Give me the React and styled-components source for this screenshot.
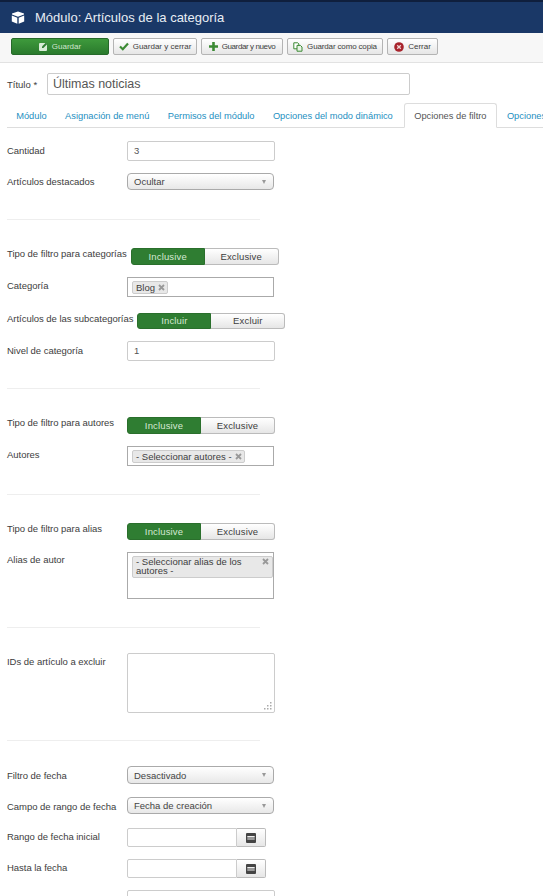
import React from 'react';
import styled, { createGlobalStyle } from 'styled-components';

const Global = createGlobalStyle`
  html, body { margin: 0; padding: 0; background: #fff; }
  body { width: 543px; height: 896px; overflow: hidden; font-family: "Liberation Sans", Arial, sans-serif; font-size: 9.5px; color: #3d3d3d; }
  * { box-sizing: border-box; }
`;
const Page = styled.div`width: 543px; height: 896px; overflow: hidden;`;
const Header = styled.header`
  height: 33px; background: #1a3867; border-top: 2px solid #0f1f3d;
  display: flex; align-items: center; padding-left: 11px; gap: 10px; color: #fff;
`;
const HeaderTitle = styled.h1`margin: 0; font-size: 13px; font-weight: 400; color: #e8edf4;`;
const Toolbar = styled.div`
  height: 30px; background: #f7f7f7; border-bottom: 1px solid #e2e2e2;
  display: flex; align-items: center; gap: 4px; padding: 0 0 2px 11px;
`;
const Btn = styled.button`
  height: 17px; width: ${p => p.$w}px; padding: 0; border: 1px solid #b4b4b4; border-radius: 2px;
  background: linear-gradient(#fff, #e6e6e6); font: 8px "Liberation Sans", sans-serif; color: #3d3d3d;
  letter-spacing: ${p => p.$ls ?? 0}px;
  display: flex; align-items: center; justify-content: center; gap: 4px;
`;
const SaveBtn = styled(Btn)`
  background: linear-gradient(#3e9a3c, #2a7a2d); border-color: #26692a; color: #cfe6cd;
`;
const TitleRow = styled.div`display: flex; align-items: center; margin: 10px 0 0 7px;`;
const TitleLabel = styled.label`width: 40px; font-size: 9.5px;`;
const TitleInput = styled.div`
  width: 363px; height: 22px; border: 1px solid #ccc; border-radius: 2px; font-size: 12.5px; color: #555;
  display: flex; align-items: center; padding-left: 5px;
`;
const Tabs = styled.nav`
  display: flex; margin: 8px 0 0 7px; height: 25px; border-bottom: 1px solid #ddd; white-space: nowrap; width: 560px;
`;
const Tab = styled.a`
  height: 25px; padding: 1px 9.2px 0; display: flex; align-items: center; font-size: 9.3px; color: #1e8fc1;
  ${p => p.$active && `color:#555; background:#fff; border:1px solid #ddd; border-bottom-color:#fff; border-radius:3px 3px 0 0; margin-left: 2px; margin-right: 1px;`}
`;
const Form = styled.div`padding: 13px 0 0 7px;`;
const Row = styled.div`display: flex; align-items: ${p => p.$top ? 'flex-start' : 'center'}; margin-bottom: ${p => p.$mb ?? 12}px;`;
const Label = styled.label`
  min-width: 116px; margin-right: 4px; font-size: 9.5px; line-height: 12px; white-space: nowrap; color: #3d3d3d; letter-spacing: -.03px;
  margin-bottom: ${p => p.$up ?? 0}px;
  ${p => p.$top && `margin-top: ${p.$top}px;`}
`;
const TextInput = styled.div`
  width: ${p => p.$w ?? 148}px; height: ${p => p.$h ?? 20}px; border: 1px solid #ccc; border-radius: 2px;
  padding: 0 0 1px 6px; display: flex; align-items: center; font-size: 9.5px; color: #555; background: #fff;
`;
const Select = styled.div`
  width: 147px; height: ${p => p.$h ?? 18}px; border: 1px solid #aaa; border-radius: 4px; background: linear-gradient(#fff, #e8e8e8);
  padding: 0 7px 0 6px; display: flex; align-items: center; justify-content: space-between; font-size: 9.5px; color: #444;
`;
const Caret = styled.span`width: 0; height: 0; border: 2.5px solid transparent; border-top: 4px solid #999; border-bottom: 0;`;
const Divider = styled.hr`
  width: 253px; height: 1px; border: 0; background: #eee; margin: ${p => p.$top ?? 28}px 0 ${p => p.$b ?? 28}px;
`;
const Toggle = styled.div`display: flex; height: ${p => p.$h ?? 17}px; width: 148px;`;
const ToggleOn = styled.div`
  flex: 0 0 74px; background: #2f7d32; border: 1px solid #2a6f2c; border-radius: 3px 0 0 3px; color: #d5e8d4;
  display: flex; align-items: center; justify-content: center; padding-bottom: 1px; font-size: 9.5px; letter-spacing: .15px;
`;
const ToggleOff = styled.div`
  flex: 1; background: linear-gradient(#fff, #e6e6e6); border: 1px solid #bbb; border-left: 0; border-radius: 0 3px 3px 0; color: #3d3d3d;
  display: flex; align-items: center; justify-content: center; padding-bottom: 1px; font-size: 9.5px; letter-spacing: .15px;
`;
const ChoiceBox = styled.div`
  width: 147px; height: ${p => p.$h ?? 20}px; border: 1px solid #aaa; padding: 3px 0 0 4px; background: #fff;
`;
const Chip = styled.span`
  display: inline-flex; align-items: center; gap: 3px; height: 13px; padding: 0 2px 1px 3px;
  border: 1px solid #ccc; border-radius: 2px; background: #e8e8e8; font-size: 9.5px; color: #3d3d3d; white-space: nowrap;
`;
const BigChip = styled.div`
  position: relative; width: 141px; height: 22px; border: 1px solid #ccc; border-radius: 2px; background: #e8e8e8;
  padding: 0 0 0 3px; font-size: 9.5px; line-height: 9px; color: #3d3d3d;
`;
const ChipXIcon = styled.svg`
  flex: none;
  ${p => p.$over && 'position: absolute; right: 3px; top: 1px;'}
`;
const Area = styled(TextInput)`position: relative; height: 60px; width: 148px;`;
const Grip = styled.svg`position: absolute; right: 2px; bottom: 2px;`;
const DateGroup = styled.div`display: flex; height: 19px;`;
const DateInput = styled.div`width: 110px; border: 1px solid #ccc; border-radius: 2px 0 0 2px;`;
const DateBtn = styled.div`
  width: 29px; border: 1px solid #bbb; border-left: 0; border-radius: 0 2px 2px 0; background: linear-gradient(#fff, #e6e6e6);
  display: flex; align-items: center; justify-content: center;
`;

const Cube = () => (
  <svg width="14" height="13" viewBox="0 0 14 13"><path fill="#fff" d="M7 .5 13 2.6v1L7 5.8 1 3.6v-1zM.8 4.6 6.3 6.7V12.8L.8 10.4zM13.2 4.6 7.7 6.7V12.8l5.5-2.4z"/></svg>
);
const EditIcon = () => (
  <svg width="9" height="9" viewBox="0 0 9 9"><rect y="1" width="8" height="8" rx="1" fill="#d8ecd7"/><path d="M3 6V4.6L7 .6 8.4 2 4.4 6z" fill="#2f7d32"/></svg>
);
const Check = () => (
  <svg width="10" height="9" viewBox="0 0 10 9"><path d="M1 4.5 3.8 7.2 9 1.6" fill="none" stroke="#3c8a34" strokeWidth="2.2"/></svg>
);
const Plus = () => (
  <svg width="9" height="9" viewBox="0 0 9 9"><path d="M3.2 0h2.6v3.2H9v2.6H5.8V9H3.2V5.8H0V3.2h3.2z" fill="#3c8a34"/></svg>
);
const Copy = () => (
  <svg width="10" height="10" viewBox="0 0 10 10"><path d="M.8.8h4l1 1v5H.8z" fill="#fff" stroke="#3c8a34"/><path d="M4 3.4h3.4l1.6 1.6v4.2H4z" fill="#e8f3e5" stroke="#3c8a34"/></svg>
);
const CloseIcon = () => (
  <svg width="10" height="10" viewBox="0 0 10 10"><circle cx="5" cy="5" r="4.8" fill="#a8242c"/><path d="M3.2 3.2 6.8 6.8M6.8 3.2 3.2 6.8" stroke="#f2d6d6" strokeWidth="1.3"/></svg>
);
const Calendar = () => (
  <svg width="10" height="10" viewBox="0 0 10 10"><path fill="#444" d="M0 1a1 1 0 0 1 1-1h8a1 1 0 0 1 1 1v8a1 1 0 0 1-1 1H1a1 1 0 0 1-1-1z"/><path fill="#eee" d="M1.3 3h7.4v1.4H1.3zM1.3 5.6h7.4v1H1.3z"/></svg>
);
const RemoveX = ({ over }) => (
  <ChipXIcon $over={over} width="7" height="7" viewBox="0 0 7 7"><path d="M1 1 6 6M6 1 1 6" stroke="#999" strokeWidth="1.8"/></ChipXIcon>
);
const FilterToggle = ({ on = 'Inclusive', off = 'Exclusive', h }) => (
  <Toggle $h={h}><ToggleOn>{on}</ToggleOn><ToggleOff>{off}</ToggleOff></Toggle>
);

export default function App() {
  return (
    <Page>
      <Global />
      <Header><Cube /><HeaderTitle>Módulo: Artículos de la categoría</HeaderTitle></Header>
      <Toolbar>
        <SaveBtn $w={98}><EditIcon />Guardar</SaveBtn>
        <Btn $w={84}><Check />Guardar y cerrar</Btn>
        <Btn $w={82} $ls={-.4}><Plus />Guardar y nuevo</Btn>
        <Btn $w={96} $ls={-.15}><Copy />Guardar como copia</Btn>
        <Btn $w={51}><CloseIcon />Cerrar</Btn>
      </Toolbar>
      <TitleRow><TitleLabel>Título *</TitleLabel><TitleInput>Últimas noticias</TitleInput></TitleRow>
      <Tabs>
        <Tab>Módulo</Tab>
        <Tab>Asignación de menú</Tab>
        <Tab>Permisos del módulo</Tab>
        <Tab>Opciones del modo dinámico</Tab>
        <Tab $active>Opciones de filtro</Tab>
        <Tab>Opciones</Tab>
      </Tabs>
      <Form>
        <Row><Label $up={1}>Cantidad</Label><TextInput>3</TextInput></Row>
        <Row $mb={0}><Label>Artículos destacados</Label><Select $h={17}>Ocultar<Caret /></Select></Row>
        <Divider $top={29} />
        <Row><Label $up={5}>Tipo de filtro para categorías</Label><FilterToggle /></Row>
        <Row $mb={16}><Label $up={3}>Categoría</Label><ChoiceBox><Chip>Blog <RemoveX /></Chip></ChoiceBox></Row>
        <Row><Label $up={4}>Artículos de las subcategorías</Label><FilterToggle on="Incluir" off="Excluir" h={16} /></Row>
        <Row $mb={0}><Label $up={1}>Nivel de categoría</Label><TextInput>1</TextInput></Row>
        <Divider $top={27} />
        <Row><Label $up={5}>Tipo de filtro para autores</Label><FilterToggle /></Row>
        <Row $mb={0}><Label $up={2}>Autores</Label><ChoiceBox><Chip>- Seleccionar autores - <RemoveX /></Chip></ChoiceBox></Row>
        <Divider />
        <Row><Label $up={5}>Tipo de filtro para alias</Label><FilterToggle /></Row>
        <Row $top $mb={0}><Label $top={2}>Alias de autor</Label><ChoiceBox $h={47}>
          <BigChip>- Seleccionar alias de los<br />autores -<RemoveX over /></BigChip>
        </ChoiceBox></Row>
        <Divider $b={25} />
        <Row $top $mb={0}><Label $top={3}>IDs de artículo a excluir</Label>
          <Area><Grip width="8" height="8" viewBox="0 0 8 8"><path fill="#aaa" d="M6 0h1.5v1.5H6zM3 3h1.5v1.5H3zM6 3h1.5v1.5H6zM0 6h1.5v1.5H0zM3 6h1.5v1.5H3zM6 6h1.5v1.5H6z"/></Grip></Area>
        </Row>
        <Divider $top={27} $b={25} />
        <Row $mb={13}><Label $up={-2}>Filtro de fecha</Label><Select>Desactivado<Caret /></Select></Row>
        <Row $mb={14}><Label $up={-2}>Campo de rango de fecha</Label><Select $h={17}>Fecha de creación<Caret /></Select></Row>
        <Row><Label $up={1}>Rango de fecha inicial</Label><DateGroup><DateInput /><DateBtn><Calendar /></DateBtn></DateGroup></Row>
        <Row><Label $up={1}>Hasta la fecha</Label><DateGroup><DateInput /><DateBtn><Calendar /></DateBtn></DateGroup></Row>
        <Row><Label></Label><TextInput /></Row>
      </Form>
    </Page>
  );
}
